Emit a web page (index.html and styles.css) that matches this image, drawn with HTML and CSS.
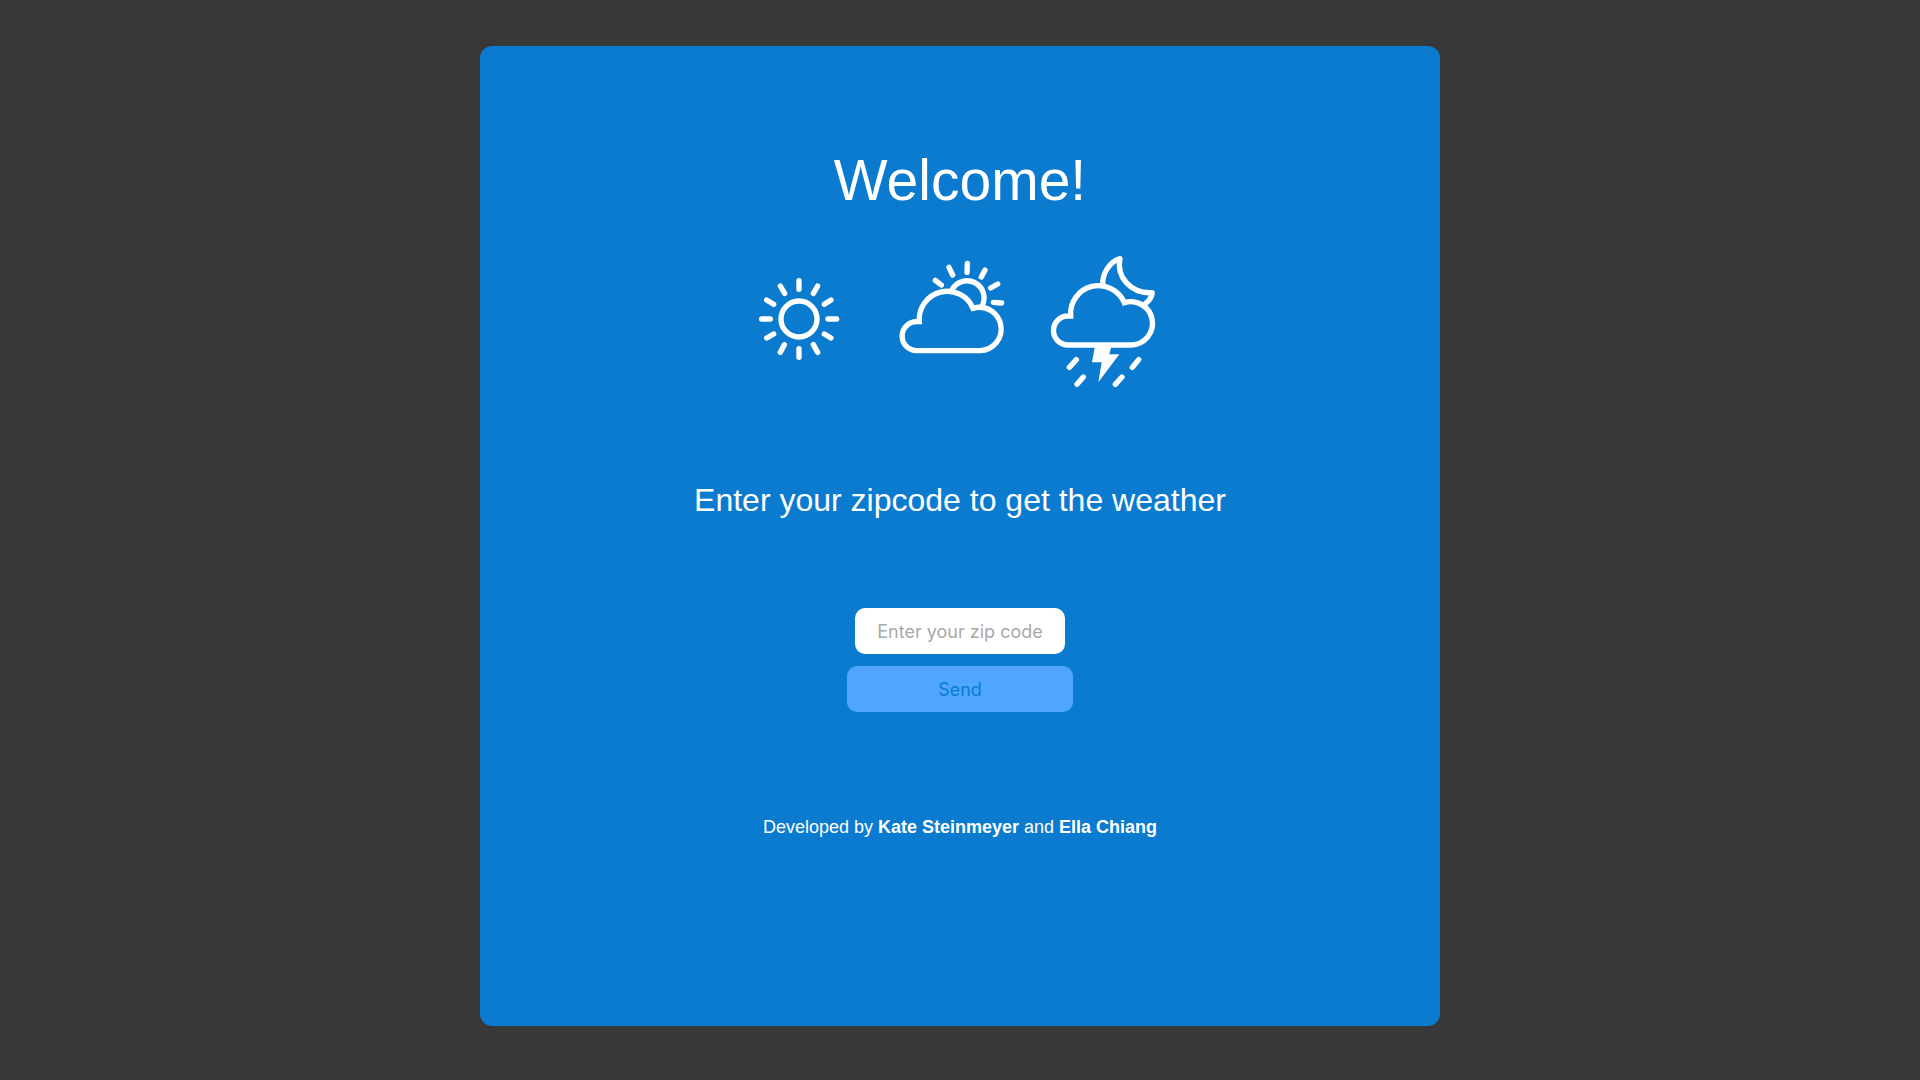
FILE: index.html
```html
<!DOCTYPE html>
<html lang="en">
<head>
<meta charset="utf-8">
<meta name="viewport" content="width=device-width, initial-scale=1">
<title>Weather</title>
<link rel="stylesheet" href="styles.css">
</head>
<body>
<main class="card">
  <h1 class="title">Welcome!</h1>
  <div class="icons" aria-hidden="true">
    <svg class="icon" viewBox="-24 -30 456 480">
      <circle cx="177" cy="207" r="54"/>
      <path d="M177 92V118M177 296V322M65 207H91M264 207H290M121 108L134 130M233 108L220 130M80 150L101 163M273 150L253 163M80 264L101 252M273 264L253 252M121 307L133 284M233 307L220 284"/>
    </svg>
    <svg class="icon" viewBox="12 -30 456 480">
      <path d="M110 302A43 43 0 0 1 110 215H118A84 84 0 0 1 279 175A65 65 0 1 1 300 302Z"/>
      <path d="M215 121A51 51 0 0 1 307 166"/>
      <path d="M262 40L261 67M207 52L218 75M315 60L304 81M353 102L332 114M365 159L340 157M166 91L184 105"/>
    </svg>
    <svg class="icon" viewBox="18 0 456 480">
      <path d="M114 315A43 43 0 0 1 114 228H122A84 84 0 0 1 283 188A65 65 0 1 1 304 315Z"/>
      <path class="moon" d="M218 134C217 102 237 66 270 56C258 110 302 162 367 158C365 172 358 182 347 190"/>
      <path class="bolt" d="M195 318H244L238 343H268L205 427L215 367H186Z"/>
      <path d="M139 359L118 382M160 411L141 433M326 359L307 382M276 411L256 433"/>
    </svg>
  </div>
  <h2 class="subtitle">Enter your zipcode to get the weather</h2>
  <form class="form">
    <input class="zip" type="text" placeholder="Enter your zip code" aria-label="Zip code">
    <button class="send" type="button">Send</button>
  </form>
  <p class="credits">Developed by <strong>Kate Steinmeyer</strong> and <strong>Ella Chiang</strong></p>
</main>
</body>
</html>
```
FILE: styles.css
```css
* {
  box-sizing: border-box;
}

body {
  margin: 0;
  padding: 46px 0;
  background: #383838;
  color: #fff;
  font-family: "Liberation Sans", Arial, sans-serif;
}

.card {
  display: flex;
  flex-direction: column;
  align-items: center;
  width: 50%;
  min-width: 600px;
  margin: 0 auto;
  padding: 98px 24px 179px;
  border-radius: 12px;
  background: #0b7bd0;
  text-align: center;
}

.title {
  margin: 0;
  font-size: 57px;
  font-weight: 300;
  line-height: 72px;
}

.icons {
  display: flex;
  margin: 24px 0 68px;
}

.icon {
  width: 152px;
  height: 160px;
  fill: none;
  stroke: #fff;
  stroke-width: 16;
  stroke-linecap: round;
}

.icon .moon {
  stroke-linejoin: round;
}

.icon .bolt {
  fill: #fff;
  stroke: none;
}

.subtitle {
  margin: 0;
  font-size: 32px;
  font-weight: 300;
  line-height: 64px;
}

.form {
  display: flex;
  flex-direction: column;
  align-items: center;
  gap: 12px;
  margin: 76px 0 95px;
}

.zip,
.send {
  height: 46px;
  border: 0;
  border-radius: 10px;
  font-family: Inter, sans-serif;
  font-size: 18px;
  text-align: center;
}

.zip {
  width: 210px;
  padding: 0 16px;
  background: #fff;
  color: #333;
}

.zip::placeholder {
  color: #a9a9a9;
}

.send {
  width: 226px;
  background: #50a6ff;
  color: #0b7bd0;
}

.credits {
  margin: 0;
  font-size: 18px;
  line-height: 40px;
}
```
